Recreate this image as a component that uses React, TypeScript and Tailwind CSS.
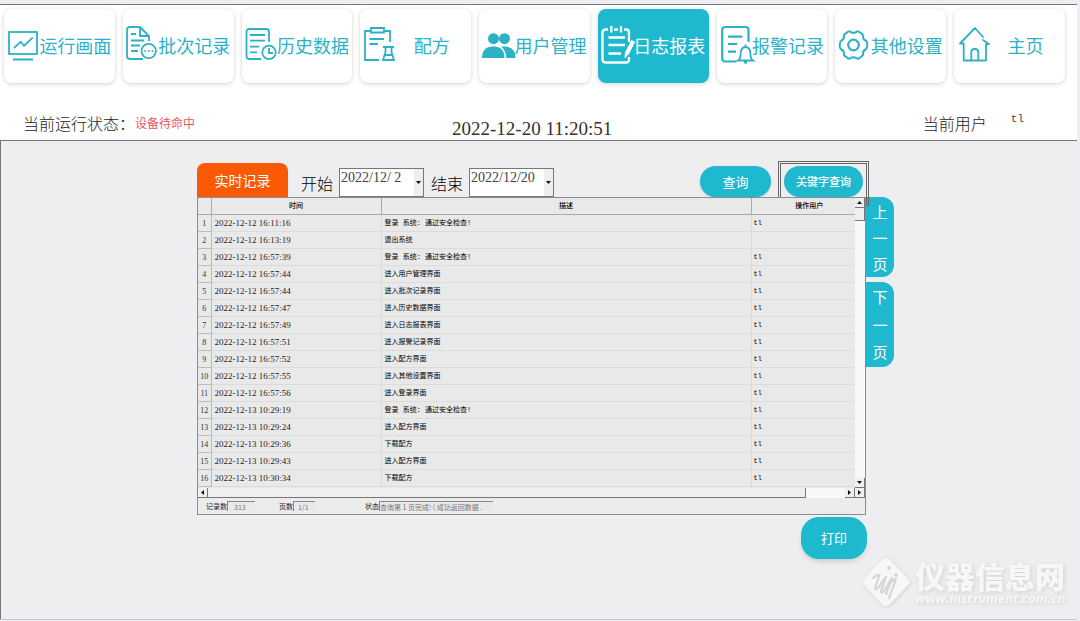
import { useState } from "react";
import type { ReactNode } from "react";

type LogRow = { time: string; text: string; user: string };

const rows: LogRow[] = [
  { time: "2022-12-12 16:11:16", text: "登录 系统: 通过安全检查!", user: "tl" },
  { time: "2022-12-12 16:13:19", text: "退出系统", user: "" },
  { time: "2022-12-12 16:57:39", text: "登录 系统: 通过安全检查!", user: "tl" },
  { time: "2022-12-12 16:57:44", text: "进入用户管理界面", user: "tl" },
  { time: "2022-12-12 16:57:44", text: "进入批次记录界面", user: "tl" },
  { time: "2022-12-12 16:57:47", text: "进入历史数据界面", user: "tl" },
  { time: "2022-12-12 16:57:49", text: "进入日志报表界面", user: "tl" },
  { time: "2022-12-12 16:57:51", text: "进入报警记录界面", user: "tl" },
  { time: "2022-12-12 16:57:52", text: "进入配方界面", user: "tl" },
  { time: "2022-12-12 16:57:55", text: "进入其他设置界面", user: "tl" },
  { time: "2022-12-12 16:57:56", text: "进入登录界面", user: "tl" },
  { time: "2022-12-13 10:29:19", text: "登录 系统: 通过安全检查!", user: "tl" },
  { time: "2022-12-13 10:29:24", text: "进入配方界面", user: "tl" },
  { time: "2022-12-13 10:29:36", text: "下载配方", user: "tl" },
  { time: "2022-12-13 10:29:43", text: "进入配方界面", user: "tl" },
  { time: "2022-12-13 10:30:34", text: "下载配方", user: "tl" },
];

const navItems: { name: string; icon: ReactNode }[] = [
  {
    name: "运行画面",
    icon: (
      <>
        <rect x="2" y="6" width="28" height="22" />
        <path d="M7 22l6.7-6.3 3.3 4 8.7-8M6 33.5h20" />
      </>
    ),
  },
  {
    name: "批次记录",
    icon: (
      <>
        <path d="M17 33H4q-3 0-3-3V4q0-3 3-3h10l9 9v5M14 1v9h9M5 8h5M5 14.5h13M5 19.5h9M5 25h7" />
        <circle cx="22.7" cy="25" r="7.2" />
        <path strokeLinecap="round" d="M19 25h.1M22.7 25h.1M26.4 25h.1" />
      </>
    ),
  },
  {
    name: "历史数据",
    icon: (
      <>
        <path d="M16 33H4.5q-3 0-3-3V6q0-3 3-3H21q3 0 3 3v10M5 9h15M5 14.7h15M5 20.7h9M5 26.4h7" />
        <circle cx="24" cy="26.4" r="6.7" />
        <path d="M24 22v5h4" />
      </>
    ),
  },
  {
    name: "配方",
    icon: (
      <>
        <path d="M16 34H2V5h6M21 5h6v11M8 2h13v4.5H8zM6.5 13H21M6.5 18h8.5" />
        <path d="M20 21h11M22.5 21v5l-2.500 8h11l-2.500-8v-5M22 29h7" />
      </>
    ),
  },
  {
    name: "用户管理",
    icon: (
      <g fill="currentColor" stroke="none">
        <circle cx="11.5" cy="12.7" r="5.5" />
        <circle cx="22.5" cy="12.7" r="5.5" />
        <path d="M0 32q0-11.500 11.300-11.500T22.500 32z" />
        <path d="M19 20.700q14.500-1.700 14.500 11.300h-9.300q0-7.500-5.200-11.300z" />
      </g>
    ),
  },
  {
    name: "日志报表",
    icon: (
      <>
        <path
          strokeWidth="2.3"
          d="M7 3.500H4.500q-3 0-3 3v27q0 3 3 3H25q3 0 3-3V31M13 3.500h4M23 3.500h2q3 0 3 3V16M10.300 0v6.500M20 0v6.500M7.500 11.500H24M7.500 19H24M7.500 27.500H20"
        />
        <path fill="currentColor" strokeWidth="1" d="M30.500 14.500l3 1.500-6 12-3.500 3.500.500-5z" />
      </>
    ),
  },
  {
    name: "报警记录",
    icon: (
      <>
        <path strokeWidth="2.2" d="M16.500 35.500H5.200q-3 0-3-3V4q0-3 3-3h20.300q3 0 3 3v12M8 10.700h14.500M8 18h9M8 25.700h8" />
        <path d="M18 34.500q2.500-1.500 2.500-5.500 0-8 5-8t5 8q0 4 2.500 5.500zM25.500 18.500V21M24 36.500h3" />
      </>
    ),
  },
  {
    name: "其他设置",
    icon: (
      <>
        <path
          strokeWidth="2"
          strokeLinejoin="round"
          d="M9 6.500q2-2 3.500-.7 3 2 6 0 1.500-1.300 3.500.7l2.300 1.600q1 1 .8 2.600 0 3 2.900 4 1.500 1 1.300 4.300t-1.300 4.300q-2.900 1-2.900 4 .2 1.600-.8 2.600L22 31.500q-2 2-3.500.7-3-2-6 0-1.500 1.300-3.500-.7l-2.300-1.600q-1-1-.8-2.600 0-3-2.900-4-1.500-1-1.300-4.300t1.300-4.300q2.900-1 2.900-4-.2-1.600.8-2.600z"
        />
        <circle cx="15.5" cy="19" r="5.3" strokeWidth="2.2" />
      </>
    ),
  },
  {
    name: "主页",
    icon: (
      <path
        strokeLinejoin="round"
        strokeLinecap="round"
        d="M26 11l-8-9L3 17.500h3.700V34.500H29V18M26 14l6 4h-3M14.300 34V26q0-3 3.500-3t3.500 3v8"
      />
    ),
  },
];

function NavButton({ name, icon, active, onClick }: { name: string; icon: ReactNode; active: boolean; onClick: () => void }) {
  return (
    <button
      onClick={onClick}
      className={`flex h-[74px] items-center rounded-lg pl-[3px] shadow-[0_1px_4px_rgba(0,0,0,0.18)] ${
        active ? "bg-[#1eb8cf] text-white" : "bg-white text-[#2db1c6]"
      }`}
    >
      <svg viewBox="0 0 31 40" className="h-10 w-[31px] shrink-0 overflow-visible" fill="none" stroke="currentColor" strokeWidth="1.8">
        {icon}
      </svg>
      <span className="flex-1 pr-0.5 pb-0.5 text-center text-[18px] leading-6 whitespace-nowrap">{name}</span>
    </button>
  );
}

function DateBox({ label, value }: { label: string; value: string }) {
  const [date, setDate] = useState(value);
  return (
    <div className="flex items-end">
      <label htmlFor={label} className="mr-1.5 pb-0.5 text-[16px] leading-6 font-light text-black">{label}</label>
      <div className="flex h-[29px] w-[85px] border border-[#777] bg-white">
        <input
          id={label}
          value={date}
          onChange={(e) => setDate(e.target.value)}
          className="h-[18px] min-w-0 flex-1 pl-px font-['Liberation_Serif',serif] text-[14px] leading-[18px] text-[#444] outline-none"
        />
        <button aria-label={label + "日期"} className="flex w-[9px] items-center justify-center bg-[#eee]">
          <Arrow d="M0 1h5L2.500 4z" />
        </button>
      </div>
    </div>
  );
}

function Arrow({ d }: { d: string }) {
  return (
    <svg viewBox="0 0 5 5" className="size-[5px]" fill="#111">
      <path d={d} />
    </svg>
  );
}

function ScrollButton({ name, d }: { name: string; d: string }) {
  return (
    <button aria-label={name} className="flex size-[10px] shrink-0 items-center justify-center border-r border-b border-[#777] bg-[#efefef]">
      <Arrow d={d} />
    </button>
  );
}

function Field({ label, value, width }: { label: string; value: string; width: string }) {
  return (
    <label className="flex items-center text-[7px] leading-[10px] whitespace-nowrap text-[#222]">
      {label}
      <input readOnly value={value} className={`h-[10px] border-t border-l border-[#888] bg-[#e9e9e9] text-[7px] leading-[9px] text-[#777] outline-none ${width}`} />
    </label>
  );
}

export default function App() {
  const [page, setPage] = useState("日志报表");

  return (
    <div className="relative flex min-h-screen flex-col overflow-hidden bg-[#eceef3] pt-1 pr-[3px] font-['Noto_Sans_CJK_SC',sans-serif]">
      <header className="border-y border-[#77777b] bg-white">
        <nav className="grid grid-cols-9 gap-2 pt-1 pr-3 pl-1">
          {navItems.map((item) => (
            <NavButton key={item.name} name={item.name} icon={item.icon} active={page === item.name} onClick={() => setPage(item.name)} />
          ))}
        </nav>
        <div className="grid h-[57px] grid-cols-3 pt-7 text-[#222]">
          <div className="flex items-start pl-[23px]">
            <span className="text-[16px] leading-6 font-light">当前运行状态：</span>
            <span className="text-[12px] leading-6 text-[#ea5560]">设备待命中</span>
          </div>
          <div className="pt-1.5 pl-[93px] font-['Liberation_Serif',serif] text-[19px] leading-6 whitespace-nowrap text-[#333]">2022-12-20 11:20:51</div>
          <div className="flex justify-end pr-[53px]">
            <span className="text-[16px] leading-6 font-light">当前用户</span>
            <span className="ml-6 font-['Liberation_Mono',monospace] text-[11px] leading-4 text-[#444]">tl</span>
          </div>
        </div>
      </header>

      <main className="flex-1 border-l border-[#777] bg-[#eeeef0] pr-[183px] pl-[196px]">
        <div className="flex">
          <div className="min-w-0 flex-1">
            <div className="flex h-14 items-end">
              <button className="mr-[13px] h-[34px] w-[91px] rounded-t-lg bg-[#fa5a05] text-[14px] text-white">实时记录</button>
              <DateBox label="开始" value="2022/12/ 2" />
              <div className="w-[7px]" />
              <DateBox label="结束" value="2022/12/20" />
              <button className="ml-auto h-[31px] w-[71px] rounded-full bg-[#1eb8cf] text-[13px] text-white shadow-sm">查询</button>
              <div className="relative -mr-[3px] -mb-[9px] ml-[7px] h-[45px] border-3 border-double border-[#666] px-[3px] pt-0.5">
                <button className="h-[31px] w-[79px] rounded-full bg-[#1eb8cf] text-[11px] font-medium text-white">关键字查询</button>
              </div>
            </div>

            <section className="relative z-10 border border-[#8c8c8c] bg-[#ececed]">
              <div className="flex">
                <div className="h-[290px] min-w-0 flex-1 overflow-hidden bg-[#e9e9e9]">
                  <table className="w-full table-fixed border-collapse text-left text-[7px] leading-[15px] text-black">
                    <colgroup>
                      <col className="w-[13px]" />
                      <col className="w-[170px]" />
                      <col />
                      <col className="w-[104px]" />
                    </colgroup>
                    <thead>
                      <tr className="h-4 border-b border-[#aaa] text-center">
                        <th className="border-r border-[#aaa] p-0"></th>
                        <th className="border-r border-[#aaa] p-0 font-medium">时间</th>
                        <th className="border-r border-[#aaa] p-0 font-medium">描述</th>
                        <th className="p-0 pl-3 font-medium">操作用户</th>
                      </tr>
                    </thead>
                    <tbody>
                      {rows.map((row, i) => (
                        <tr key={i} className="h-[17px] border-b border-[#dcdcdc]">
                          <td className="border-r border-b border-[#bbb] p-0 pt-px text-center font-['Liberation_Serif',serif] text-[8px] text-[#333]">{i + 1}</td>
                          <td className="border-r border-[#d8d8d8] p-0 pt-px pl-[3px] font-['Liberation_Serif',serif] text-[9px] text-[#222]">{row.time}</td>
                          <td className="border-r border-[#d8d8d8] p-0 pt-px pl-[3px] font-['Liberation_Mono','Noto_Sans_CJK_SC',monospace]">{row.text}</td>
                          <td className="p-0 pt-px pl-0.5 font-['Liberation_Mono',monospace]">{row.user}</td>
                        </tr>
                      ))}
                    </tbody>
                  </table>
                </div>
                <div className="flex w-[10px] flex-col bg-[#f8f8f8]">
                  <ScrollButton name="向上" d="M0 4h5L2.500 1z" />
                  <div className="h-[13px] border-r border-b border-[#777] bg-[#efefef]" />
                  <div className="flex-1" />
                  <ScrollButton name="向下" d="M0 1h5L2.500 4z" />
                </div>
              </div>
              <div className="flex h-[10px] bg-[#f8f8f8]">
                <ScrollButton name="向左" d="M4 0v5L1 2.500z" />
                <div className="w-[598px] border-r border-b border-[#777] bg-[#efefef]" />
                <div className="flex-1" />
                <ScrollButton name="向右" d="M1 0v5l3-2.500z" />
                <ScrollButton name="末页" d="M1 0v5l3-2.500z" />
              </div>
              <div className="flex h-4 items-center pl-2">
                <Field label="记录数" value="313" width="w-[28px] pl-1.5" />
                <div className="w-6" />
                <Field label="页数" value="1/1" width="w-[22px] pl-1" />
                <div className="w-[50px]" />
                <Field label="状态" value="查询第 1 页完成! ( 成功返回数据 ." width="w-[114px]" />
              </div>
            </section>
          </div>

          <div className="flex w-7 flex-col gap-[5px] pt-14">
            <button className="flex h-20 flex-col items-center justify-between rounded-r-xl bg-[#1eb8cf] py-0.5 text-[15px] leading-[26px] text-white">
              <span>上</span>
              <span>一</span>
              <span>页</span>
            </button>
            <button className="flex h-[85px] flex-col items-center justify-between rounded-r-xl bg-[#1eb8cf] py-0.5 text-[15px] leading-[26px] text-white">
              <span>下</span>
              <span>一</span>
              <span>页</span>
            </button>
          </div>
        </div>

        <div className="flex justify-end pt-0.5 pr-[27px]">
          <button className="h-[42px] w-[66px] rounded-[18px] bg-[#1eb8cf] text-[13px] text-white shadow-md">打印</button>
        </div>
      </main>
      <div className="h-0.5 border-t border-[#c8c8cc]" />

      {/* site mark in the corner */}
      <div className="absolute right-3.5 bottom-[14px] z-20 flex items-center text-[#f7f7f8] drop-shadow-[1px_1px_2px_rgba(0,0,0,0.12)]">
        <svg viewBox="0 0 50 50" className="size-[50px]">
          <path fill="currentColor" d="M25 1q2 0 4 2l18 19q3 3 0 6L29 47q-4 4-8 0L3 28q-3-3 0-6L21 3q2-2 4-2z" />
          <path
            fill="none"
            stroke="#d6d6da"
            strokeWidth="2.2"
            strokeLinecap="round"
            strokeLinejoin="round"
            d="M12 21q6-5 6-2l-4 12q0 3 3 0l8-11-5 14q0 3 3 0l8-13-6 16M31 24l4-2-7 19"
          />
          <circle cx="28" cy="11" r="2" fill="#d6d6da" />
          <circle cx="35" cy="18" r="2" fill="#d6d6da" />
        </svg>
        <div className="ml-1 w-[151px]">
          <div className="text-[30px] leading-8 font-black whitespace-nowrap">仪器信息网</div>
          <div className="font-['Open_Sans',sans-serif] text-[13px] leading-[14px] font-bold whitespace-nowrap italic">www.instrument.com.cn</div>
        </div>
      </div>
    </div>
  );
}
